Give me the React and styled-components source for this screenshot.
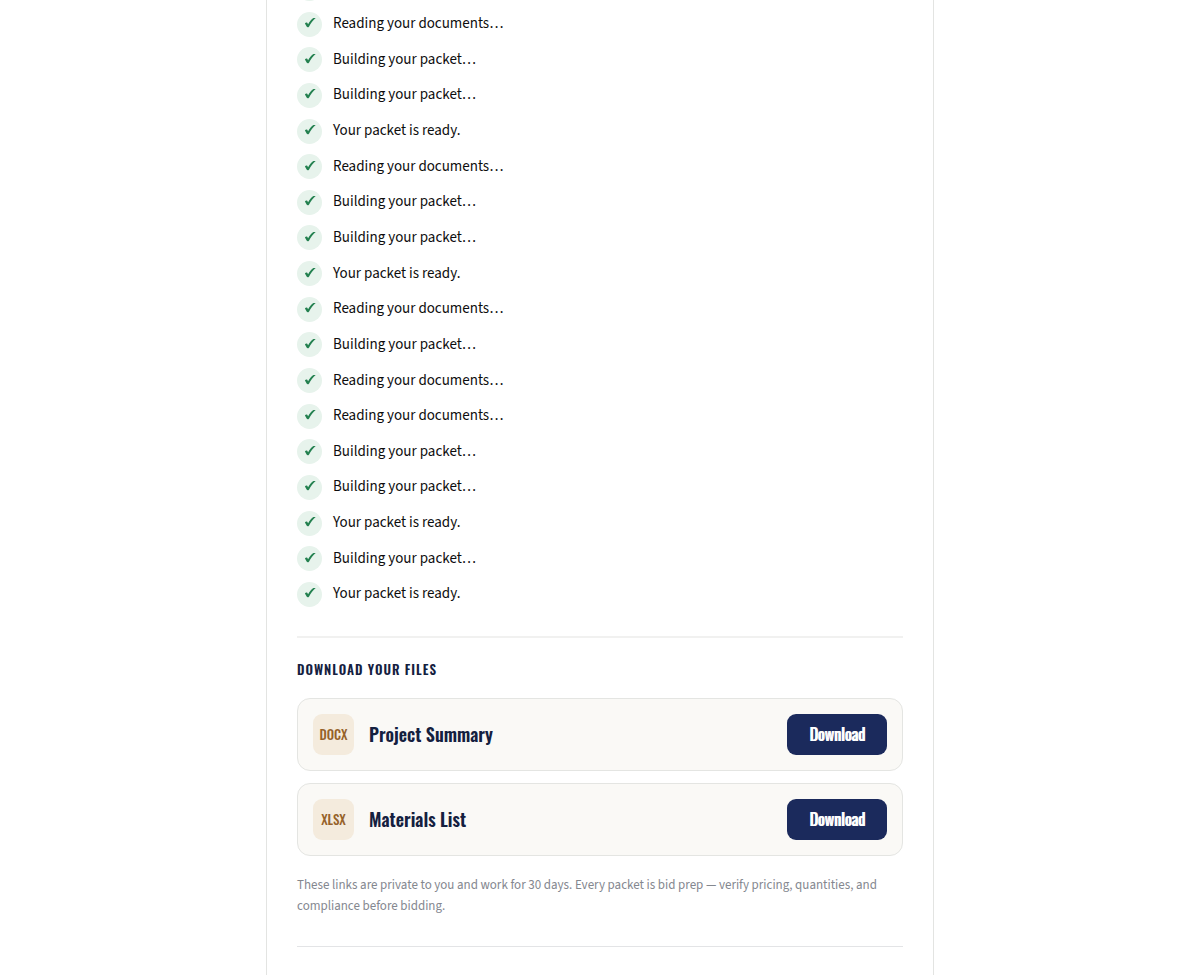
import React from 'react'
import styled, { createGlobalStyle } from 'styled-components'

const GlobalStyle = createGlobalStyle`
  body {
    margin: 0;
    background-color: #FFFFFF;
    color: #0D0D0D;
    font-family: 'Source Sans 3', 'Noto Sans CJK KR', 'Open Sans', sans-serif;
  }
  *, *::before, *::after {
    box-sizing: border-box;
  }
`

const heading = "'Oswald', 'Roboto Condensed', 'Liberation Sans Narrow', 'Liberation Sans', sans-serif"

const Page = styled.div`
  height: 100vh;
  overflow: hidden;
`

const Panel = styled.main`
  max-width: 668px;
  min-height: 120vh;
  margin: -24px auto 0;
  padding: 0 30px;
  border: 1px solid #E3E4E2;
  border-top: 0;
`

const StepList = styled.ul`
  display: flex;
  flex-direction: column;
  justify-content: space-between;
  min-height: 631px;
  margin: 0;
  padding: 0;
  list-style: none;
`

const Step = styled.li`
  display: flex;
  align-items: center;
  gap: 11px;
  height: 25px;
  font-size: 15px;
  line-height: 24px;
`

const Tick = styled.span`
  display: flex;
  align-items: center;
  justify-content: center;
  flex: none;
  width: 25px;
  height: 25px;
  padding-bottom: 2px;
  border-radius: 50%;
  background-color: #E7F3EC;
  color: #23804F;
`

const Downloads = styled.section`
  margin-top: 29px;
  padding: 21px 0 29px;
  border-top: 2px solid #F1F1F0;
  border-bottom: 1px solid #E3E4E6;
`

const Title = styled.h2`
  margin: 0 0 19px;
  font-family: ${heading};
  font-size: 13px;
  line-height: 20px;
  font-weight: 600;
  letter-spacing: 1px;
  text-transform: uppercase;
  color: #14203F;
`

const FileCard = styled.div`
  display: flex;
  align-items: center;
  gap: 15px;
  margin-bottom: 12px;
  padding: 15px;
  border: 1px solid #E4E5E2;
  border-radius: 13px;
  background-color: #FAF9F6;
`

const FileType = styled.span`
  display: flex;
  align-items: center;
  justify-content: center;
  width: 41px;
  height: 41px;
  padding-bottom: 1px;
  border-radius: 9px;
  background-color: #F4EBDD;
  color: #96622A;
  font-family: ${heading};
  font-size: 13px;
  font-weight: 500;
`

const FileName = styled.span`
  flex: 1;
  padding-bottom: 1px;
  font-family: ${heading};
  font-size: 18px;
  line-height: 28px;
  font-weight: 600;
  color: #14203F;
`

const DownloadButton = styled.button`
  width: 100px;
  height: 41px;
  padding: 0 0 2px;
  border: 0;
  border-radius: 9px;
  background-color: #1B2A5C;
  color: #FFFFFF;
  font-family: ${heading};
  font-size: 16px;
  font-weight: 400;
  text-shadow: 1px 0 currentColor;
  cursor: pointer;
`

const Note = styled.p`
  margin: 19px 0 0;
  font-size: 13px;
  line-height: 21px;
  color: #84878F;
`

const READING = 'Reading your documents…'
const BUILDING = 'Building your packet…'
const READY = 'Your packet is ready.'

const steps = [
  '',
  READING, BUILDING, BUILDING, READY,
  READING, BUILDING, BUILDING, READY,
  READING, BUILDING, READING, READING,
  BUILDING, BUILDING, READY, BUILDING, READY
]

const files = [
  { type: 'DOCX', name: 'Project Summary' },
  { type: 'XLSX', name: 'Materials List' }
]

const CheckIcon = () => (
  <svg width='12' height='12' viewBox='0 0 12 12' aria-hidden='true'>
    <path
      fill='currentColor'
      d='M.9 6.5C1.5 5.6 2.9 5.2 3.4 6L4.1 7.2C5.6 4.6 7.6 2.3 9.4 1.1L11.7 1C9.1 3.1 6.9 5.9 5.1 9.4C4.6 10.3 3.2 10.6 2.8 9.8Z'
    />
  </svg>
)

export default () => (
  <Page>
    <GlobalStyle />
    <Panel>
      <StepList>
        {steps.map((step, i) => (
          <Step key={i}>
            <Tick><CheckIcon /></Tick>
            <span>{step}</span>
          </Step>
        ))}
      </StepList>

      <Downloads>
        <Title>Download your files</Title>
        {files.map(file => (
          <FileCard key={file.type}>
            <FileType>{file.type}</FileType>
            <FileName>{file.name}</FileName>
            <DownloadButton type='button' aria-label={`Download ${file.name}`}>Download</DownloadButton>
          </FileCard>
        ))}
        <Note>
          These links are private to you and work for 30 days. Every packet is bid prep — verify pricing, quantities, and compliance before bidding.
        </Note>
      </Downloads>
    </Panel>
  </Page>
)
